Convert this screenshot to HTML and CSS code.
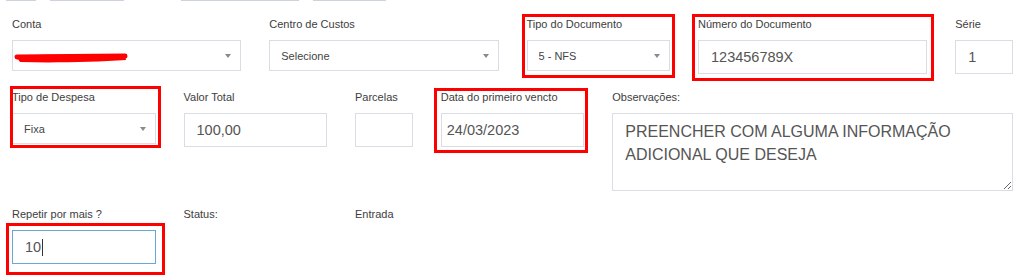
FILE: index.html
```html
<!DOCTYPE html>
<html lang="pt-BR">
<head>
<meta charset="utf-8">
<title>Lançamento</title>
<link rel="stylesheet" href="styles.css">
</head>
<body>
  <div class="prev-row">
    <span class="seg seg-a"></span>
    <span class="seg seg-b"></span>
    <span class="seg seg-c"></span>
    <span class="seg seg-d"></span>
  </div>

  <form class="form-grid">
    <!-- Row 1 -->
    <div class="field span-3">
      <label class="lbl">Conta</label>
      <div class="select">
        <svg class="redact" width="118" height="14" viewBox="0 0 118 14">
          <path d="M2 5 C20 3 60 4 111 4 L112 9 C80 11 40 12 6 11 Z" fill="#ff0000"/>
          <path d="M3 6 L111 5" stroke="#ff0000" stroke-width="5" stroke-linecap="round"/>
        </svg>
        <span class="caret"></span>
      </div>
    </div>
    <div class="field span-3">
      <label class="lbl">Centro de Custos</label>
      <div class="select"><span class="sel-text">Selecione</span><span class="caret"></span></div>
    </div>
    <div class="field span-2 mark mark-doc">
      <label class="lbl">Tipo do Documento</label>
      <div class="select"><span class="sel-text">5 - NFS</span><span class="caret"></span></div>
    </div>
    <div class="field span-3 mark mark-num">
      <label class="lbl">Número do Documento</label>
      <div class="input">123456789X</div>
    </div>
    <div class="field span-1">
      <label class="lbl">Série</label>
      <div class="input">1</div>
    </div>

    <!-- Row 2 -->
    <div class="field span-2 mark mark-desp">
      <label class="lbl">Tipo de Despesa</label>
      <div class="select"><span class="sel-text">Fixa</span><span class="caret"></span></div>
    </div>
    <div class="field span-2">
      <label class="lbl">Valor Total</label>
      <div class="input">100,00</div>
    </div>
    <div class="field span-1">
      <label class="lbl">Parcelas</label>
      <div class="input"></div>
    </div>
    <div class="field span-2 mark mark-data">
      <label class="lbl">Data do primeiro vencto</label>
      <div class="input input-date">24/03/2023</div>
    </div>
    <div class="field span-5">
      <label class="lbl">Observações:</label>
      <div class="textarea">PREENCHER COM ALGUMA INFORMAÇÃO<br>ADICIONAL QUE DESEJA</div>
    </div>

    <!-- Row 3 -->
    <div class="field span-2">
      <label class="lbl">Repetir por mais ?</label>
      <div class="mark mark-rep">
        <div class="input input-focus">10<span class="cursor"></span></div>
      </div>
    </div>
    <div class="field span-2">
      <label class="lbl">Status:</label>
    </div>
    <div class="field span-1">
      <label class="lbl">Entrada</label>
    </div>
  </form>
</body>
</html>
```

FILE: styles.css
```css
* { box-sizing: border-box; }

html, body {
  margin: 0;
  padding: 0;
  background: #ffffff;
  font-family: "Liberation Sans", Arial, sans-serif;
  color: #3a3a3a;
}

body { min-height: 279px; }

.prev-row {
  display: flex;
  height: 1px;
  padding-left: 6px;
}
.seg { display: block; height: 1px; background: #cdd3dc; }
.seg-a { width: 30px; }
.seg-b { width: 74px; margin-left: 14px; }
.seg-c { width: 118px; margin-left: 57px; }
.seg-d { width: 73px; margin-left: 14px; }

.form-grid {
  width: 1001px;
  margin: 15px 0 0 12px;
  display: grid;
  grid-template-columns: repeat(12, 1fr);
  column-gap: 28px;
  row-gap: 15px;
  align-items: start;
}

.span-1 { grid-column: span 1; }
.span-2 { grid-column: span 2; }
.span-3 { grid-column: span 3; }
.span-5 { grid-column: span 5; }

.field { display: flex; flex-direction: column; }

.lbl {
  display: block;
  font-size: 11px;
  line-height: 17px;
  margin-bottom: 7px;
  color: #3d3d3d;
  white-space: nowrap;
}

.select {
  height: 31px;
  border: 1px solid #dadde3;
  background: #fff;
  display: flex;
  align-items: center;
  padding: 0 9px 0 11px;
  font-size: 11px;
  color: #444;
}
.sel-text { white-space: nowrap; }
.caret {
  margin-left: auto;
  width: 0;
  height: 0;
  border-left: 3.5px solid transparent;
  border-right: 3.5px solid transparent;
  border-top: 4px solid #8a8a8a;
}
.redact { display: block; margin-left: -10px; margin-top: 5px; }

.input {
  height: 34px;
  border: 1px solid #dadde3;
  background: #fff;
  display: flex;
  align-items: center;
  padding: 0 12px;
  font-size: 14.5px;
  color: #555;
  white-space: nowrap;
}
.input-date { padding-left: 5px; }
.input-focus { border-color: #6aa6d6; }
.cursor {
  display: inline-block;
  width: 1px;
  height: 17px;
  background: #333;
  margin-left: 1px;
}

.textarea {
  height: 78px;
  border: 1px solid #dadde3;
  background: #fff;
  padding: 6px 12px;
  font-size: 16px;
  line-height: 23px;
  color: #555;
  resize: vertical;
  overflow: auto;
}

/* red annotation boxes drawn over the screenshot */
.mark { position: relative; }
.mark::after {
  content: "";
  position: absolute;
  border: 3px solid #ff0000;
  pointer-events: none;
}
.mark-doc::after  { top: -2px; right: -5px; bottom: -7px; left: -5px; }
.mark-num::after  { top: -2px; right: -7px; bottom: -7px; left: -6px; }
.mark-desp::after { top: -3px; right: -5px; bottom: -4px; left: -2px; }
.mark-data::after { top: -1px; right: -4px; bottom: -6px; left: -7px; }
.mark-rep::after  { top: -7px; right: -9px; bottom: -11px; left: -6px; }
```
